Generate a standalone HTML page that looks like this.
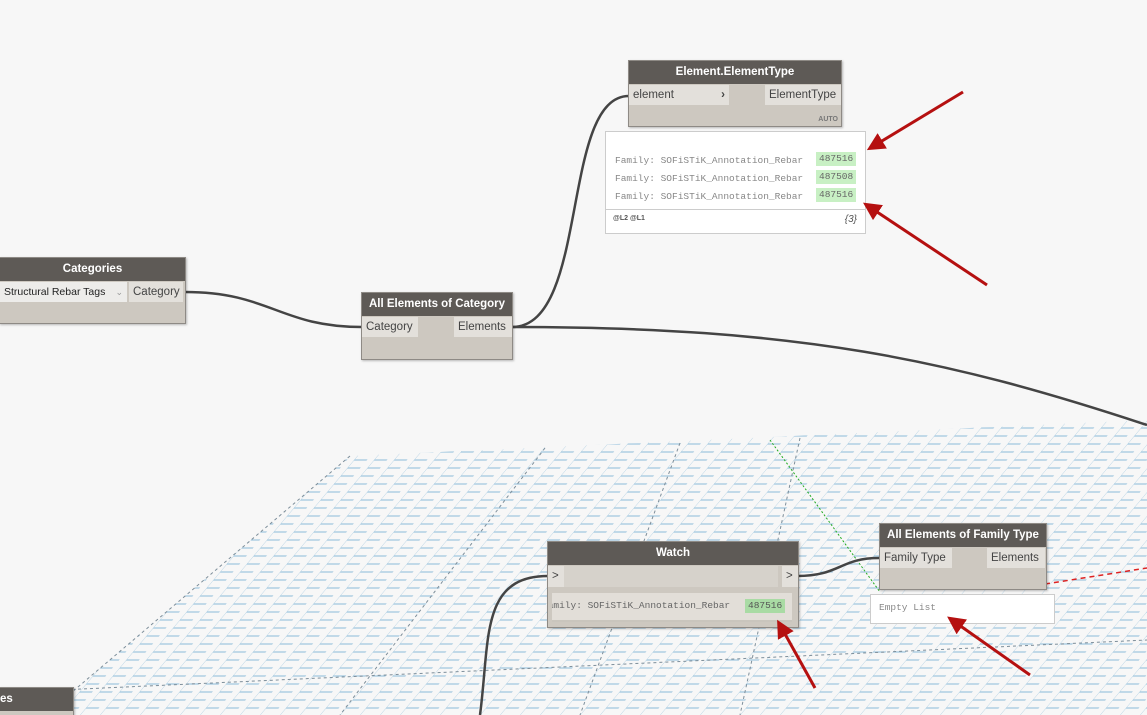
<!DOCTYPE html>
<html><head><meta charset="utf-8"><style>
html,body{margin:0;width:1147px;height:715px;overflow:hidden}
body{background:#f7f7f7;font-family:"Liberation Sans",sans-serif;position:relative}
.n{position:absolute;background:#cdc8c0;border:1px solid #8e8a85;box-shadow:1px 1px 2px rgba(0,0,0,.25)}
.h{background:#5e5a56;color:#fff;font-weight:bold;font-size:11.5px;text-align:center;height:23px;line-height:23px;white-space:nowrap;overflow:hidden}
.p{position:absolute;background:#e3e0db;color:#444;font-size:11.5px;height:20px;line-height:20px;padding:0 4px;white-space:nowrap}
.mono{font-family:"Liberation Mono",monospace;font-size:9.5px;color:#888;white-space:nowrap}
.g{position:absolute;background:#c8f0c4;color:#666;padding:0 3px;height:14px;line-height:14px}
svg{position:absolute;left:0;top:0}
</style></head><body>
<svg width="1147" height="715">
<defs>
<pattern id="gp" width="20" height="8" patternUnits="userSpaceOnUse" patternTransform="skewX(-40)">
<line x1="0" y1="4" x2="13" y2="4" stroke="#9fc6df" stroke-width="1.3"/>
<line x1="0" y1="0" x2="0" y2="8" stroke="#aacde2" stroke-width="0.9"/>
</pattern>
</defs>
<polygon points="350,456 1147,420 1147,715 45,715" fill="url(#gp)"/>
<g stroke="#7d8e9a" stroke-width="1" stroke-dasharray="3,3" fill="none">
<line x1="350" y1="456" x2="45" y2="715"/>
<line x1="545" y1="448" x2="340" y2="715"/>
<line x1="680" y1="443" x2="580" y2="715"/>
<line x1="800" y1="438" x2="740" y2="715"/>
<line x1="60" y1="690" x2="1147" y2="640"/>
</g>
<line x1="770" y1="440" x2="880" y2="592" stroke="#2a2" stroke-width="1" stroke-dasharray="2,2"/>
<line x1="1045" y1="584" x2="1147" y2="568" stroke="#d22" stroke-width="1.5" stroke-dasharray="5,4"/>
<g stroke="#444" stroke-width="2.5" fill="none">
<path d="M185,292 C270,292 280,327 362,327"/>
<path d="M512,327 C590,327 560,96 629,96"/>
<path d="M512,327 C800,327 950,360 1147,425"/>
<path d="M480,715 C490,640 480,576 548,576"/>
<path d="M797,576 C840,576 840,558 879,558"/>
</g>
</svg>

<div class="n" style="left:-1px;top:257px;width:185px;height:65px"><div class="h">Categories</div>
<div class="p" style="left:0;top:24px;width:119px;background:#edecea;font-size:10.5px;color:#222">Structural Rebar Tags <span style="float:right;color:#999;font-size:9px">⌄</span></div>
<div class="p" style="left:129px;top:24px;width:46px">Category</div></div>

<div class="n" style="left:361px;top:292px;width:150px;height:66px"><div class="h">All Elements of Category</div>
<div class="p" style="left:0;top:24px;width:48px">Category</div>
<div class="p" style="left:92px;top:24px;width:50px">Elements</div></div>

<div class="n" style="left:628px;top:60px;width:212px;height:65px"><div class="h">Element.ElementType</div>
<div class="p" style="left:0;top:24px;width:92px">element<span style="float:right;font-weight:bold">›</span></div>
<div class="p" style="left:136px;top:24px;width:68px">ElementType</div>
<div style="position:absolute;right:3px;bottom:3px;font-size:7px;font-weight:bold;color:#777">AUTO</div></div>

<div style="position:absolute;left:605px;top:131px;width:259px;height:101px;background:#fff;border:1px solid #ccc">
<div class="mono" style="position:absolute;left:9px;top:20px;line-height:18px">Family: SOFiSTiK_Annotation_Rebar<br>Family: SOFiSTiK_Annotation_Rebar<br>Family: SOFiSTiK_Annotation_Rebar</div>
<div class="g mono" style="left:210px;top:20px">487516</div>
<div class="g mono" style="left:210px;top:38px">487508</div>
<div class="g mono" style="left:210px;top:56px">487516</div>
<div style="position:absolute;left:0;right:0;top:77px;border-top:1px solid #ccc"></div>
<div style="position:absolute;left:7px;top:83px;font-size:7px;font-weight:bold;color:#555">@L2 @L1</div>
<div style="position:absolute;right:8px;top:82px;font-size:10px;font-style:italic;color:#555">{3}</div></div>

<div class="n" style="left:547px;top:541px;width:250px;height:85px"><div class="h">Watch</div>
<div class="p" style="left:0;top:24px;width:8px;height:21px">&gt;</div>
<div style="position:absolute;left:16px;top:24px;width:214px;height:21px;background:#d6d2cb"></div>
<div class="p" style="left:234px;top:24px;width:8px;height:21px">&gt;</div>
<div style="position:absolute;left:4px;top:51px;width:240px;height:27px;background:#e2ded8;border-bottom:2px solid #c9c5bd;overflow:hidden">
<div class="mono" style="position:absolute;left:-10px;top:7px;color:#666">Family: SOFiSTiK_Annotation_Rebar</div>
<div class="g mono" style="left:193px;top:6px;background:#a9dba4;color:#555">487516</div></div></div>

<div class="n" style="left:879px;top:523px;width:166px;height:65px"><div class="h">All Elements of Family Type</div>
<div class="p" style="left:0;top:24px;width:64px">Family Type</div>
<div class="p" style="left:107px;top:24px;width:50px">Elements</div></div>

<div style="position:absolute;left:870px;top:594px;width:183px;height:28px;background:#fff;border:1px solid #ccc">
<div class="mono" style="position:absolute;left:8px;top:7px">Empty List</div></div>

<div class="n" style="left:-1px;top:687px;width:73px;height:40px"><div class="h" style="text-align:left">es</div></div>

<svg width="1147" height="715">
<defs><marker id="a" markerWidth="6" markerHeight="6" refX="4" refY="3" orient="auto"><path d="M0,0 L6,3 L0,6 z" fill="#b51010"/></marker></defs>
<g stroke="#b51010" stroke-width="3" marker-end="url(#a)" fill="none">
<line x1="963" y1="92" x2="872" y2="147"/>
<line x1="987" y1="285" x2="868" y2="206"/>
<line x1="815" y1="688" x2="780" y2="625"/>
<line x1="1030" y1="675" x2="952" y2="620"/>
</g></svg>
</body></html>
